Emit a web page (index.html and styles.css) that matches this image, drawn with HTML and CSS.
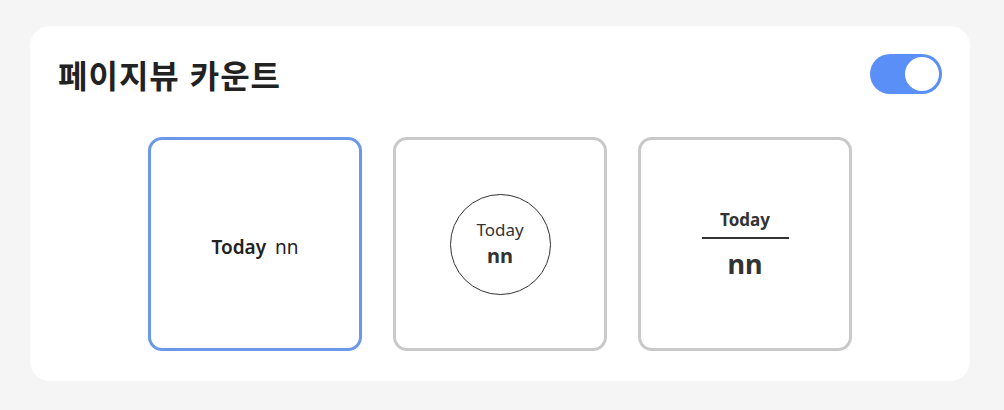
FILE: index.html
```html
<!DOCTYPE html>
<html lang="ko">
<head>
<meta charset="utf-8">
<link rel="stylesheet" href="styles.css">
</head>
<body>
<div class="card">
  <div class="header">
    <h1 class="title">페이지뷰 카운트</h1>
    <div class="toggle"><span class="knob"></span></div>
  </div>
  <div class="options">
    <div class="opt selected">
      <span class="inline"><b>Today</b><span class="inline-num">nn</span></span>
    </div>
    <div class="opt">
      <div class="circle">
        <span class="c-label">Today</span>
        <span class="c-num">nn</span>
      </div>
    </div>
    <div class="opt">
      <div class="stack">
        <span class="s-label">Today</span>
        <span class="s-line"></span>
        <span class="s-num">nn</span>
      </div>
    </div>
  </div>
</div>
</body>
</html>
```

FILE: styles.css
```css
* { box-sizing: border-box; }
html, body { margin: 0; padding: 0; }
body {
  background: #f5f5f5;
  font-family: "Noto Sans", "Noto Sans CJK KR", sans-serif;
  color: #222;
  width: 1004px;
  height: 410px;
  padding: 26px 34px 29px 30px;
}
.card {
  background: #fff;
  border-radius: 20px;
  height: 355px;
  padding: 24px 28px 0 28px;
}
.header {
  display: flex;
  align-items: center;
  justify-content: space-between;
  height: 48px;
}
.title {
  margin: 0;
  font-family: "Noto Sans CJK KR", sans-serif;
  font-size: 32px;
  font-weight: 700;
  color: #222;
  letter-spacing: 1px;
  line-height: 1;
}
.toggle {
  width: 72px;
  height: 40px;
  border-radius: 20px;
  background: #5b8ff8;
  display: flex;
  align-items: center;
  justify-content: flex-end;
  padding: 1px;
}
.knob {
  width: 38px;
  height: 38px;
  border-radius: 50%;
  background: #fff;
  border: 2px solid #5b8ff8;
}
.options {
  display: flex;
  justify-content: center;
  gap: 31px;
  margin-top: 39px;
}
.opt {
  width: 214px;
  height: 214px;
  border: 3px solid #c9c9c9;
  border-radius: 14px;
  display: flex;
  align-items: center;
  justify-content: center;
}
.opt.selected { border-color: #6b98e9; }
.inline {
  font-size: 19px;
  color: #222;
  margin-top: 5px;
}
.inline b { font-weight: 600; }
.inline-num { font-weight: 400; margin-left: 9px; }
.circle {
  width: 101px;
  height: 101px;
  border: 1px solid #333;
  border-radius: 50%;
  display: flex;
  flex-direction: column;
  align-items: center;
  justify-content: center;
}
.c-label { font-size: 17px; line-height: 22px; color: #333; }
.c-num { font-size: 20px; line-height: 26px; font-weight: 700; color: #333; margin-top: 2px; }
.stack {
  display: flex;
  flex-direction: column;
  align-items: center;
}
.s-label { font-size: 17px; font-weight: 700; line-height: 22px; color: #333; }
.s-line { width: 87px; height: 2px; background: #333; margin: 6px 0 10px; }
.s-num { font-size: 27px; font-weight: 700; line-height: 30px; color: #333; }
```
